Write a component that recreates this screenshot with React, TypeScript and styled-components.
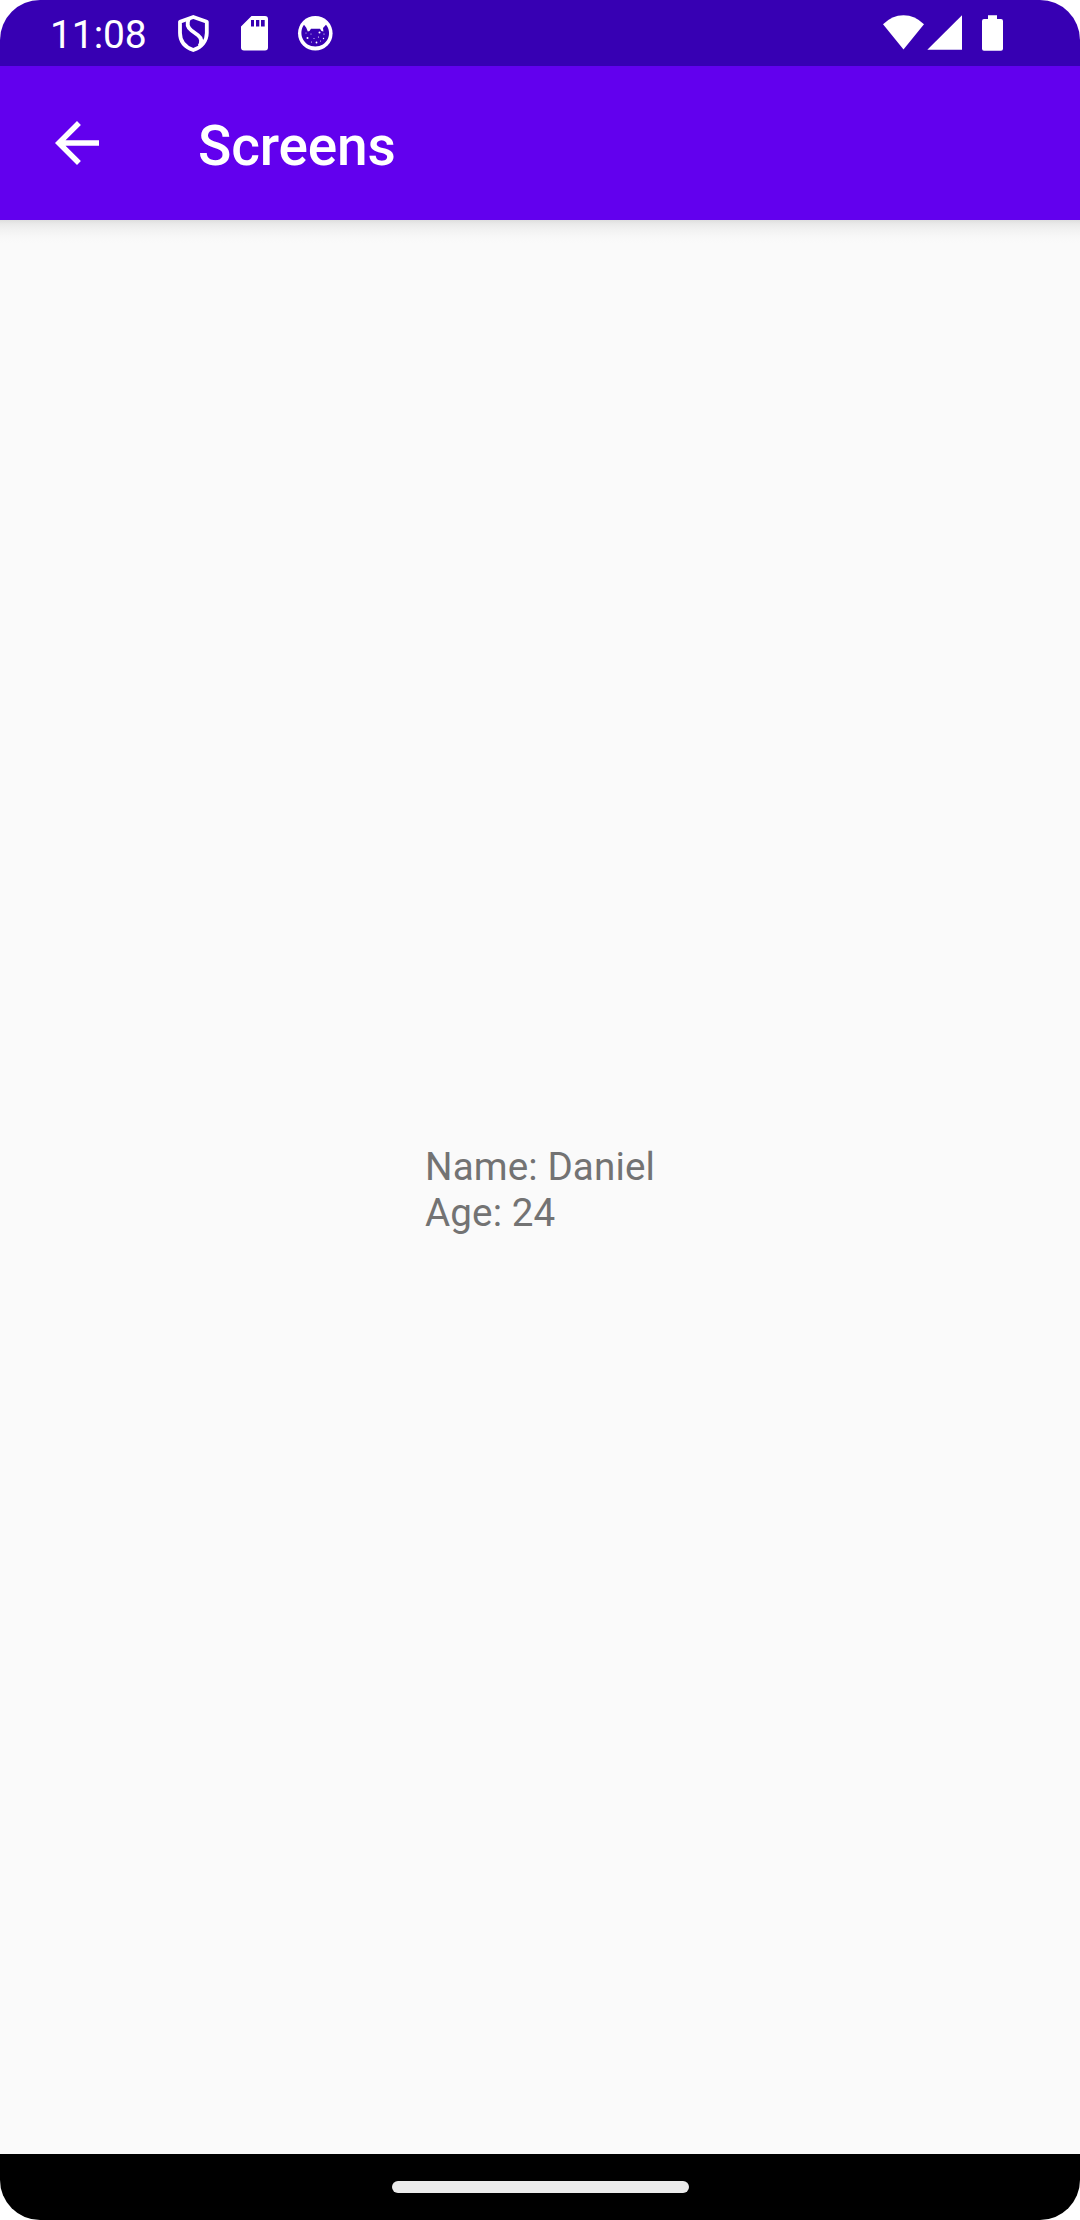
import React from 'react';
import styled, { createGlobalStyle } from 'styled-components';

const GlobalStyle = createGlobalStyle`
  body {
    margin: 0;
    background: #ffffff;
  }
`;

const Screen = styled.div`
  display: flex;
  flex-direction: column;
  width: 1080px;
  height: 2220px;
  border-radius: 40px;
  overflow: hidden;
  background: #fafafa;
  font-family: Roboto, 'Liberation Sans', sans-serif;
`;

const StatusBar = styled.header`
  display: flex;
  flex: none;
  justify-content: space-between;
  box-sizing: border-box;
  height: 66px;
  padding: 0 76px 0 50px;
  background: #3700b3;
  color: #ffffff;
`;

const StatusGroup = styled.div`
  display: flex;
  align-items: flex-start;
`;

const Clock = styled.span`
  width: 128px;
  padding-top: 12px;
  font-size: 39px;
  line-height: 46px;
  letter-spacing: -0.1px;
  white-space: nowrap;
`;

const Glyph = styled.svg<{ $width: number; $gap?: number }>`
  display: block;
  flex: none;
  width: ${(p) => p.$width}px;
  height: 66px;
  margin-left: ${(p) => p.$gap ?? 0}px;
  fill: #ffffff;
`;

const AppBar = styled.div`
  display: flex;
  flex: none;
  align-items: center;
  box-sizing: border-box;
  height: 154px;
  padding-left: 44px;
  background: #6200ee;
  color: #ffffff;
`;

const BackButton = styled.button`
  display: flex;
  width: 66px;
  height: 66px;
  margin: -1px 88px 0 0;
  padding: 0;
  border: 0;
  background: none;
`;

const BackIcon = styled.svg`
  width: 66px;
  height: 66px;
  fill: #ffffff;
`;

const Title = styled.h1`
  margin: 6px 0 0;
  font-size: 55px;
  line-height: 64px;
  font-weight: 500;
  letter-spacing: -0.15px;
`;

const Content = styled.main`
  display: flex;
  flex: 1;
  align-items: center;
  justify-content: center;
  background: linear-gradient(#dedede 0, #eaeaea 4px, #f2f2f2 10px, #f8f8f8 17px, #fafafa 23px);
`;

const Details = styled.p`
  margin: 6px 0 0;
  color: #737373;
  font-size: 38.6px;
  line-height: 46px;
  letter-spacing: 0.12px;
  white-space: pre-line;
`;

const NavigationBar = styled.footer`
  display: flex;
  flex: none;
  justify-content: center;
  box-sizing: border-box;
  height: 66px;
  padding-top: 27px;
  background: #000000;
`;

const HomeHandle = styled.div`
  width: 297px;
  height: 12px;
  border-radius: 6px;
  background: #ebebeb;
`;

const SPECKLES: [number, number, number][] = [
  [306, 33, 0.5], [311, 34, 0.5], [319.5, 32.5, 1], [324, 34, 0.6],
  [307.5, 38, 1], [314, 38.5, 0.5], [318.5, 37, 0.6], [323.5, 38.5, 0.7],
  [311.5, 42, 0.5], [316.5, 42.5, 0.9], [320.5, 41, 0.5],
];

export default function App() {
  return (
    <>
      <GlobalStyle />
      <Screen>
        <StatusBar>
          <StatusGroup>
            <Clock>11:08</Clock>
            <Glyph $width={32} viewBox="178 0 32 66">
              <g fill="none" stroke="#ffffff" strokeWidth="3.8" strokeLinejoin="round">
                <path d="M193.3 17 L206.8 21.8 V33 C206.8 41 201.5 47.2 193.3 50 C185 47.2 180 41 180 33 V21.8 Z" />
                <path d="M189 18.5 C186.5 23.5 187.5 27.5 191.5 30.5 L198 35.3 C202 38.5 202 42 199.5 46" />
              </g>
            </Glyph>
            <Glyph $width={27} $gap={31} viewBox="241 0 27 66">
              <path
                fillRule="evenodd"
                d="M251.5 16 H265 Q268 16 268 19 V47.5 Q268 50.5 265 50.5 H244 Q241 50.5 241 47.5 V26.5 Z M251 20 V26.5 H254 V20 Z M256 20 V26.5 H259.3 V20 Z M261 20 V26.5 H264.7 V20 Z"
              />
            </Glyph>
            <Glyph $width={36} $gap={29} viewBox="297 0 36 66">
              <circle cx="315.3" cy="33.3" r="17.3" />
              <path
                fill="#3700b3"
                d="M304 24.8 L306.3 27.8 L307.8 31.5 L309.5 31 L311 28.8 H320 L321.5 31 L323.4 31.5 L323 28 L326 24.8 C329.2 28.5 330 34 328 38.5 C325.8 43.5 320.8 46.5 315.3 46.5 C309.6 46.5 304.8 43.5 302.6 38.5 C300.6 34 301.2 28.5 304 24.8 Z"
              />
              {SPECKLES.map(([x, y, r]) => (
                <circle key={`${x}-${y}`} cx={x} cy={y} r={r} />
              ))}
            </Glyph>
          </StatusGroup>
          <StatusGroup>
            <Glyph $width={42} viewBox="883 0 42 66">
              <path d="M883 24.3 Q892 15.2 903.5 15.2 Q915 15.2 924 24.3 L903.5 49.5 Z" />
            </Glyph>
            <Glyph $width={35} $gap={2} viewBox="927 0 35 66">
              <path d="M927.3 49.8 L962 15.2 V49.8 Z" />
            </Glyph>
            <Glyph $width={22} $gap={20} viewBox="982 0 22 66">
              <path d="M988 15.2 H997 V19 H1001 Q1003 19 1003 21 V48.8 Q1003 50.8 1001 50.8 H984 Q982 50.8 982 48.8 V21 Q982 19 984 19 H988 Z" />
            </Glyph>
          </StatusGroup>
        </StatusBar>
        <AppBar>
          <BackButton aria-label="Back">
            <BackIcon viewBox="0 0 24 24">
              <path d="M20 11H7.83l5.59-5.59L12 4l-8 8 8 8 1.41-1.41L7.83 13H20v-2z" />
            </BackIcon>
          </BackButton>
          <Title>Screens</Title>
        </AppBar>
        <Content>
          <Details>{'Name: Daniel\nAge: 24'}</Details>
        </Content>
        <NavigationBar>
          <HomeHandle />
        </NavigationBar>
      </Screen>
    </>
  );
}
